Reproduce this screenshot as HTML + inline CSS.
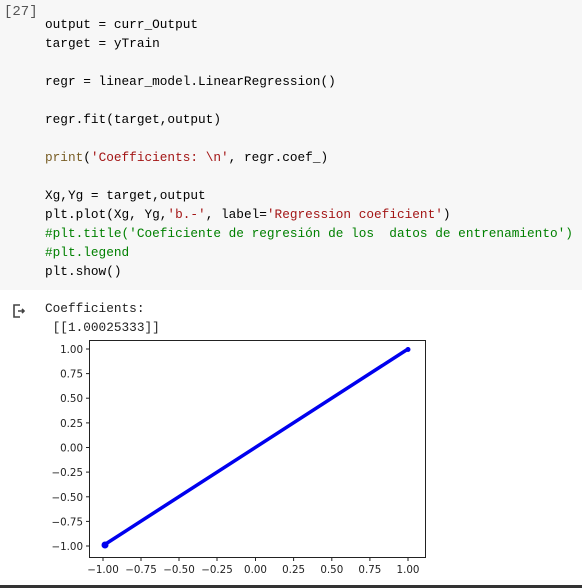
<!DOCTYPE html>
<html><head><style>
body{margin:0;width:582px;height:588px;background:#fff;position:relative;overflow:hidden;font-family:"Liberation Mono",monospace;}
.code{position:absolute;left:0;top:0;width:582px;height:290px;background:#f7f7f7;}
.num{position:absolute;left:4px;top:4px;font-size:14px;color:#555;}
pre{margin:0;position:absolute;left:45px;top:15px;font-family:"Liberation Mono",monospace;font-size:12.75px;line-height:19px;color:#000;}
.s{color:#a31515}.c{color:#008000}.f{color:#795e26}
.out{position:absolute;left:45px;top:299px;font-size:12.75px;line-height:19px;color:#222;white-space:pre;font-family:"Liberation Mono",monospace;}
.bar{position:absolute;left:0;top:585px;width:582px;height:3px;background:#333;}
</style></head><body>
<div class="code"><div class="num">[27]</div>
<pre>output = curr_Output
target = yTrain

regr = linear_model.LinearRegression()

regr.fit(target,output)

<span class="f">print</span>(<span class="s">'Coefficients: \n'</span>, regr.coef_)

Xg,Yg = target,output
plt.plot(Xg, Yg,<span class="s">'b.-'</span>, label=<span class="s">'Regression coeficient'</span>)
<span class="c">#plt.title('Coeficiente de regresión de los  datos de entrenamiento')</span>
<span class="c">#plt.legend</span>
plt.show()</pre></div>
<svg style="position:absolute;left:12px;top:303px" width="20" height="16" viewBox="0 0 20 16"><path d="M8 2H2V14H8M6 8H12M10 6L12 8L10 10" fill="none" stroke="#444" stroke-width="1.6"/></svg>
<div class="out">Coefficients:
 [[1.00025333]]</div>
<svg style="position:absolute;left:0;top:0" width="582" height="588" font-family="DejaVu Sans, sans-serif" font-size="10.3" fill="#222">
<rect x="89.5" y="340.5" width="336" height="217" fill="none" stroke="#222" stroke-width="1"/>
<g stroke="#222">
<line x1="86" y1="349" x2="89" y2="349"/><line x1="86" y1="373.6" x2="89" y2="373.6"/><line x1="86" y1="398.2" x2="89" y2="398.2"/><line x1="86" y1="422.9" x2="89" y2="422.9"/><line x1="86" y1="447.5" x2="89" y2="447.5"/><line x1="86" y1="472.1" x2="89" y2="472.1"/><line x1="86" y1="496.8" x2="89" y2="496.8"/><line x1="86" y1="521.4" x2="89" y2="521.4"/><line x1="86" y1="546" x2="89" y2="546"/>
<line x1="103" y1="558" x2="103" y2="561"/><line x1="141" y1="558" x2="141" y2="561"/><line x1="179" y1="558" x2="179" y2="561"/><line x1="217" y1="558" x2="217" y2="561"/><line x1="255.5" y1="558" x2="255.5" y2="561"/><line x1="293.6" y1="558" x2="293.6" y2="561"/><line x1="331.8" y1="558" x2="331.8" y2="561"/><line x1="369.9" y1="558" x2="369.9" y2="561"/><line x1="408" y1="558" x2="408" y2="561"/>
</g>
<g text-anchor="end">
<text x="83" y="353">1.00</text><text x="83" y="377.6">0.75</text><text x="83" y="402.2">0.50</text><text x="83" y="426.9">0.25</text><text x="83" y="451.5">0.00</text><text x="83" y="476.1">−0.25</text><text x="83" y="500.8">−0.50</text><text x="83" y="525.4">−0.75</text><text x="83" y="550">−1.00</text>
</g>
<g text-anchor="middle">
<text x="103" y="573">−1.00</text><text x="141" y="573">−0.75</text><text x="179" y="573">−0.50</text><text x="217" y="573">−0.25</text><text x="255.5" y="573">0.00</text><text x="293.6" y="573">0.25</text><text x="331.8" y="573">0.50</text><text x="369.9" y="573">0.75</text><text x="408" y="573">1.00</text>
</g>
<line x1="104" y1="545" x2="408" y2="349" stroke="#0000ee" stroke-width="3.5" stroke-linecap="round"/>
<circle cx="105" cy="545" r="3.5" fill="#0000ee"/><circle cx="408" cy="349.5" r="2.5" fill="#0000ee"/>
</svg>
<div class="bar"></div>
</body></html>
